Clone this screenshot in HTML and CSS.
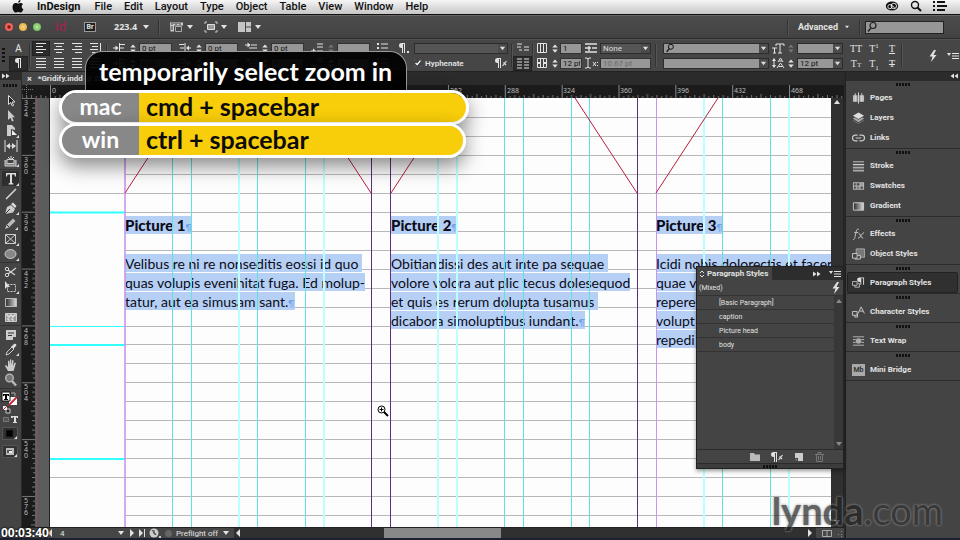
FILE: index.html
```html
<!DOCTYPE html>
<html lang="en">
<head>
<meta charset="utf-8">
<title>Gridify.indd</title>
<link rel="stylesheet" href="styles.css">
</head>
<body>
<svg class="sprite" aria-hidden="true">
  <defs>
    <linearGradient id="fade"><stop offset="0" stop-color="#2a2a2a"/><stop offset="1" stop-color="#ddd"/></linearGradient>
    <symbol id="left" viewBox="0 0 14 12"><path d="M2 1.5h10M2 4.5h7M2 7.5h10M2 10.5h7" stroke="currentColor" stroke-width="1.2"/></symbol>
    <symbol id="center" viewBox="0 0 14 12"><path d="M2 1.5h10M4 4.5h6M2 7.5h10M4 10.5h6" stroke="currentColor" stroke-width="1.2"/></symbol>
    <symbol id="right" viewBox="0 0 14 12"><path d="M2 1.5h10M5 4.5h7M2 7.5h10M5 10.5h7" stroke="currentColor" stroke-width="1.2"/></symbol>
    <symbol id="spine" viewBox="0 0 14 12"><path d="M2 1.5h8M4 4.5h6M2 7.5h8M4 10.5h6" stroke="currentColor" stroke-width="1.2"/><path d="M12.5 1v10" stroke="currentColor"/></symbol>
    <symbol id="just" viewBox="0 0 14 12"><path d="M2 1.5h10M2 4.5h10M2 7.5h10M2 10.5h10" stroke="currentColor" stroke-width="1.2"/></symbol>
    <symbol id="indent" viewBox="0 0 14 12"><path d="M1 6h5M7.500 1v10M8 2.500h5M8 6h4M8 9.500h5" stroke="currentColor"/><path d="M3.500 3.500L6.500 6L3.500 8.500z" fill="currentColor"/></symbol>
    <symbol id="outdent" viewBox="0 0 14 12"><path d="M13 6H9M7 1v10M1 2.500h5M2 6h4M1 9.500h5" stroke="currentColor"/><path d="M11 3.500L8 6l3 2.500z" fill="currentColor"/></symbol>
    <symbol id="first" viewBox="0 0 14 12"><path d="M1 3h5M7 3h6M5 6h8M7 9.500h6" stroke="currentColor" stroke-width="1.2"/><path d="M3.500 .5L6.500 3L3.500 5.500z" fill="currentColor"/></symbol>
    <symbol id="last" viewBox="0 0 14 12"><path d="M7 2h6M7 5h6M1 9h4M7 9h6" stroke="currentColor" stroke-width="1.2"/><path d="M3 6.500L6 9L3 11.500z" fill="currentColor"/></symbol>
    <symbol id="bullets" viewBox="0 0 14 12"><path d="M2 1h2v2H2zM2 5h2v2H2zM2 9h2v2H2z" fill="currentColor"/><path d="M6 2h7M6 6h7M6 10h7" stroke="currentColor" stroke-width="1.2"/></symbol>
    <symbol id="pilcrow" viewBox="0 0 14 12"><path d="M9 1H5.500a2.500 2.500 0 0 0 0 5H6v5h1V2h1v9h1z" fill="currentColor"/></symbol>
    <symbol id="pildot" viewBox="0 0 14 12"><path d="M9 1H5.500a2.500 2.500 0 0 0 0 5H6v5h1V2h1v9h1zM11 9h2v2h-2z" fill="currentColor"/></symbol>
    <symbol id="pilplus" viewBox="0 0 14 12"><path d="M7 1H3.500a2.500 2.500 0 0 0 0 5H4v5h1V2h1v9h1z" fill="currentColor"/><path d="M8.500 9l4-5M9.500 5.500l2.500 2.500" stroke="currentColor" stroke-width="1.2"/></symbol>
    <symbol id="span" viewBox="0 0 14 12"><path d="M1 2h5M1 5h4M8 5h5M8 8h5M3 8h3" stroke="currentColor" stroke-width="1.2"/></symbol>
    <symbol id="cols" viewBox="0 0 14 12"><path d="M1 2h5M1 5h5M1 8h5M1 11h5M8 2h5M8 5h5M8 8h5M8 11h5" stroke="currentColor"/></symbol>
    <symbol id="columns" viewBox="0 0 12 12"><path d="M1.500 1.500h9v9h-9zM4.500 1v10M7.500 1v10" fill="none" stroke="currentColor"/></symbol>
    <symbol id="gutter" viewBox="0 0 12 12"><path d="M1.500 1.500h9v9h-9zM4.500 1v10M7.500 1v10" fill="none" stroke="currentColor"/><path d="M2 6h3M7 6h3" stroke="currentColor" stroke-width="2"/></symbol>
    <symbol id="bars" viewBox="0 0 14 12"><path d="M1 2h12M1 6h6M8 6h5M1 10h12M5 4v5" stroke="currentColor" stroke-width="1.400"/></symbol>
    <symbol id="ibeam" viewBox="0 0 14 12"><path d="M1 1h2l1 1 1-1h2M4 2v8M1 11h2l1-1 1 1h2M9 5l3 4M12 5L9 9M13.500 5v1M13.500 8v1" fill="none" stroke="currentColor"/></symbol>
    <symbol id="search" viewBox="0 0 12 12"><circle cx="7" cy="4.500" r="3" fill="none" stroke="currentColor" stroke-width="1.200"/><path d="M5 7L2 10.500" stroke="currentColor" stroke-width="1.600"/></symbol>
    <symbol id="spot" viewBox="0 0 12 12"><circle cx="5" cy="5" r="3.500" fill="none" stroke="currentColor" stroke-width="1.400"/><path d="M7.500 7.500L11 11" stroke="currentColor" stroke-width="2"/></symbol>
    <symbol id="spin" viewBox="0 0 8 12"><path d="M1 5l3-3.500L7 5zM1 7l3 3.500L7 7z" fill="currentColor"/></symbol>
    <symbol id="down" viewBox="0 0 8 6"><path d="M1 1h6L4 5z" fill="currentColor"/></symbol>
    <symbol id="play" viewBox="0 0 6 8"><path d="M1 0v8l4-4z" fill="currentColor"/></symbol>
    <symbol id="playend" viewBox="0 0 6 8"><path d="M0 0v8l4-4z" fill="currentColor"/><path d="M5.500 0v8" stroke="currentColor"/></symbol>
    <symbol id="back" viewBox="0 0 6 8"><path d="M5 0v8L1 4z" fill="currentColor"/></symbol>
    <symbol id="bolt" viewBox="0 0 10 14"><path d="M6 1L1.500 7.500h3L3 13l5.500-7H5.500L8 1z" fill="currentColor"/></symbol>
    <symbol id="flyout" viewBox="0 0 12 8"><path d="M0 1h4L2 4z" fill="currentColor"/><path d="M5 1.500h7M5 4h7M5 6.500h7" stroke="currentColor"/></symbol>
    <symbol id="dbl" viewBox="0 0 8 6"><path d="M0 .5v5L3.500 3zM4 .5v5L7.500 3z" fill="currentColor"/></symbol>
    <symbol id="dbll" viewBox="0 0 8 6"><path d="M4 .5v5L.5 3zM8 .5v5L4.500 3z" fill="currentColor"/></symbol>
    <symbol id="updown" viewBox="0 0 6 8"><path d="M1 3l2-2 2 2M1 5l2 2 2-2" fill="none" stroke="currentColor"/></symbol>
    <symbol id="kern" viewBox="0 0 14 12"><path d="M1 6h5M3.500 6v5M2 11h3M5 2h8M9 2v9M7 11h4M5 2v2M13 2v2" stroke="currentColor" fill="none"/></symbol>
    <symbol id="lead" viewBox="0 0 14 12"><path d="M7 5l2.500-4L12 5M8 4h3M6 11l3.500-5 3.500 5M7.500 9.500h4M3 2v8" stroke="currentColor" fill="none"/><path d="M1 4l2-3 2 3zM1 8l2 3 2-3z" fill="currentColor"/></symbol>
    <symbol id="apple" viewBox="0 0 12 13"><path d="M8.500 0C7 .2 6 1.500 6.200 2.800 7.600 2.800 8.600 1.500 8.500 0zM6.200 3.700C5.500 3.700 4.700 3.100 3.700 3.100 1.900 3.100.5 4.700.5 7.200c0 2.600 1.700 5.300 3.200 5.300.9 0 1.400-.6 2.500-.6s1.500.6 2.400.6c1.200 0 2.300-1.900 2.800-3.300C9.300 8.400 9.100 5.300 11 4.300 9.700 2.600 7.600 3 6.200 3.700z" fill="currentColor"/></symbol>
    <symbol id="cloud" viewBox="0 0 14 11"><ellipse cx="7" cy="5.500" rx="6.800" ry="5" fill="currentColor"/><circle cx="4.700" cy="6.200" r="2.300" fill="none" stroke="#eee"/><circle cx="9" cy="5.500" r="3" fill="none" stroke="#eee"/><path d="M6 4l4 3.500" stroke="#eee"/></symbol>
    <symbol id="list" viewBox="0 0 14 10"><path d="M0 1h2M4 1h8M0 5h2M4 5h10M0 9h2M4 9h8" stroke="currentColor" stroke-width="2"/></symbol>
    <symbol id="view" viewBox="0 0 14 12"><path d="M0 1.500h13v3H4v6H.5z" fill="#ccc"/><path d="M5.500 5.500h6v5h-6z" fill="none" stroke="#aaa"/><path d="M2 2v2M4 2v1M6 2v2M8 2v1M10 2v2M1 6h2M1 8h2" stroke="#333"/></symbol>
    <symbol id="screen" viewBox="0 0 14 12"><path d="M3.500 3.500h7v5h-7z" fill="#999" stroke="#ddd"/><path d="M1 3V1h2M11 1h2v2M13 9v2h-2M3 11H1V9" fill="none" stroke="#ccc"/></symbol>
    <symbol id="arrange" viewBox="0 0 14 12"><path d="M0 1h7v10H0zM8 1h5v4.500H8zM8 6.500h5V11H8z" fill="#c5c5c5"/></symbol>
    <symbol id="t-select" viewBox="0 0 16 14"><path d="M5.500 1.500v9l2.200-2 1.600 3.500 1.300-.6L9 8h3z" fill="#222" stroke="#ddd"/></symbol>
    <symbol id="t-direct" viewBox="0 0 16 14"><path d="M5 1v10l2.500-2.300L9 12.500l1.700-.7L9.200 8.200H12z" fill="#ccc"/></symbol>
    <symbol id="t-page" viewBox="0 0 16 14"><path d="M4 1h5l3 3v2L8 5v7H4z" fill="#ccc"/><path d="M9 6l5 5H9z" fill="#eee"/><path d="M16 14v-3l-3 3z" fill="#ddd"/></symbol>
    <symbol id="t-gap" viewBox="0 0 16 14"><path d="M2 1v12M14 1v12M4 7h8" stroke="#ddd"/><path d="M3 7l4-3v6zM13 7L9 4v6z" fill="#ddd"/></symbol>
    <symbol id="t-collect" viewBox="0 0 16 14"><path d="M2 6v6h11V6M4 5.500h7v4H4z" fill="#888" stroke="#ccc"/><path d="M8 6V2M5 3l3 3 3-3" stroke="#ddd" fill="none"/><path d="M16 13v-3l-3 3z" fill="#ddd"/></symbol>
    <symbol id="t-type" viewBox="0 0 16 14"><path d="M3 1h10v3.500h-1L11.500 2.500H9V11l1.500.5v1h-5v-1L7 11V2.500H4.500L4 4.500H3z" fill="#ddd"/><path d="M16 14v-3l-3 3z" fill="#ddd"/></symbol>
    <symbol id="t-line" viewBox="0 0 16 14"><path d="M3 12L13 2" stroke="#ddd" stroke-width="1.400"/></symbol>
    <symbol id="t-pen" viewBox="0 0 16 14"><path d="M2 12l2-7 4-2 4 4-2 3.500z" fill="#ccc"/><path d="M8 2l2-1.500 3.500 3.500L12 6z" fill="#ddd"/><path d="M2 12l5-5" stroke="#333"/><path d="M16 13v-3l-3 3z" fill="#ddd"/></symbol>
    <symbol id="t-pencil" viewBox="0 0 16 14"><path d="M2 12l1.500-4L10 1.500l2.500 2.500L6 10.500z" fill="#bbb"/><path d="M4 8l2 2" stroke="#333"/><path d="M15 13v-3l-3 3z" fill="#ddd"/></symbol>
    <symbol id="t-frame" viewBox="0 0 16 14"><path d="M2.500 2.500h10v9h-10zM2.500 2.500l10 9M12.500 2.500l-10 9" stroke="#ccc" fill="none"/><path d="M16 14v-3l-3 3z" fill="#ddd"/></symbol>
    <symbol id="t-ellipse" viewBox="0 0 16 14"><ellipse cx="7.500" cy="7" rx="5.500" ry="4.500" fill="#888" stroke="#ccc"/><path d="M16 14v-3l-3 3z" fill="#ddd"/></symbol>
    <symbol id="t-scissors" viewBox="0 0 16 14"><path d="M13 3L5 9M12 10L5 5" stroke="#ccc" stroke-width="1.500"/><circle cx="4" cy="4" r="1.700" fill="none" stroke="#ddd"/><circle cx="4" cy="10" r="1.700" fill="none" stroke="#ddd"/></symbol>
    <symbol id="t-transform" viewBox="0 0 16 14"><path d="M4.500 4.500h8v7h-8z" fill="none" stroke="#ccc" stroke-dasharray="2 1"/><path d="M2 1v8l2-2 3 0z" fill="#ddd"/><path d="M16 14v-3l-3 3z" fill="#ddd"/></symbol>
    <symbol id="t-grad" viewBox="0 0 16 14"><path d="M2.500 3.500h11v8h-11z" fill="url(#fade)" stroke="#bbb"/></symbol>
    <symbol id="t-feather" viewBox="0 0 16 14"><path d="M2.500 3.500h11v8h-11z" fill="#999" stroke="#ccc"/><path d="M3 5h2v2h2V5h2v2h2V5h2M4 9h2v2M8 9h2v2" stroke="#eee" fill="none"/></symbol>
    <symbol id="t-note" viewBox="0 0 16 14"><path d="M3 2h10v7h-3v3H3z" fill="#ccc"/><path d="M5 5h6M5 7.500h4" stroke="#333"/></symbol>
    <symbol id="t-dropper" viewBox="0 0 16 14"><path d="M3 12l1-3 5-5 2 2-5 5z" fill="none" stroke="#ccc"/><path d="M8 3l1 0 2-2c2-1 3 1 2 2l-2 2 0 2z" fill="#ddd"/><path d="M16 13v-3l-3 3z" fill="#ddd"/></symbol>
    <symbol id="t-hand" viewBox="0 0 16 14"><path d="M5 13L2 8l1-1 2 2V3l1.300-.5L7 7V1.500h1.300V7l1-5 1.200.3L10.200 8l1.500-3.500 1.200.5L11.500 10l-1 3z" fill="#ccc"/></symbol>
    <symbol id="t-zoom" viewBox="0 0 16 14"><circle cx="6.500" cy="5" r="3.800" fill="#777" stroke="#bbb" stroke-width="1.300"/><path d="M9 8l4 4.500" stroke="#bbb" stroke-width="2.400"/></symbol>
    <symbol id="d-pages" viewBox="0 0 14 12"><path d="M1 3h5v7H1zM8 3h5v7H8z" fill="#bbb"/><path d="M7 0v12M3.500 1v9M10.500 1v9" stroke="#ddd"/></symbol>
    <symbol id="d-layers" viewBox="0 0 14 12"><path d="M7 0l6 3.500L7 7 1 3.500z" fill="#ddd"/><path d="M1 6.500l2-1L7 8l4-2.500 2 1L7 10.500z" fill="#aaa"/><path d="M1 8.500l6 3.500 6-3.500" fill="none" stroke="#777"/></symbol>
    <symbol id="d-links" viewBox="0 0 14 12"><path d="M6 3H3.500a3 3 0 0 0 0 6H6M8 3h2.500a3 3 0 0 1 0 6H8M4 6h6" fill="none" stroke="#ccc" stroke-width="1.300"/></symbol>
    <symbol id="d-stroke" viewBox="0 0 14 12"><path d="M1 1.500h12" stroke="#ccc"/><path d="M1 4.500h12" stroke="#ccc" stroke-width="1.500"/><path d="M1 7.800h12M1 11h12" stroke="#aaa" stroke-width="2"/></symbol>
    <symbol id="d-swatch" viewBox="0 0 14 12"><path d="M1 2h12v8H1z" fill="#bbb"/><path d="M2 3h2v2.500H2zM5 3h3v2.500H5zM2 6.500h2V9H2z" fill="#444"/><path d="M5 6.500h3V9H5z" fill="#777"/><path d="M9 3h3v2.500H9z" fill="#999"/><path d="M9 6.500h3V9H9z" fill="#555"/></symbol>
    <symbol id="d-grad" viewBox="0 0 14 12"><path d="M1.500 2.500h11v8h-11z" fill="url(#fade)" stroke="#ccc"/></symbol>
    <symbol id="d-fx" viewBox="0 0 14 12"><path d="M1 12c2 0 2-1.500 3-6.500S5.500.8 7.500.8M2.500 4.500h4M7 5c2 0 2 5.500 5 5.500M13 4.500c-2 0-4 6-6.500 6" fill="none" stroke="#ccc"/></symbol>
    <symbol id="d-object" viewBox="0 0 14 12"><path d="M4.500.5h9v9h-9z" fill="#777" stroke="#aaa"/><path d="M.5 5.500h5v5h-5zM6 7.500h3v4H3" fill="#444" stroke="#ccc"/></symbol>
    <symbol id="d-para" viewBox="0 0 14 12"><path d="M.5 4.500h5v4h-5zM6 6.500h2v4H3v-2" fill="none" stroke="#bbb"/><path d="M13 0H8a2.500 2.500 0 0 0 0 5h1v3h1V1h2v7h1z" fill="#ddd"/></symbol>
    <symbol id="d-char" viewBox="0 0 14 12"><path d="M.5 5.500h5v4h-5zM6 7.500v4H3v-2M6.500 7.500L9.800.5l3.500 7M8 5h4" fill="none" stroke="#ccc"/></symbol>
    <symbol id="d-wrap" viewBox="0 0 14 12"><path d="M1 1.500h12M1 10.500h12M1 4.500h3M1 7.500h3M10 4.500h3M10 7.500h3" stroke="#bbb"/><circle cx="7" cy="6" r="3" fill="#aaa"/></symbol>
  </defs>
</svg>

<div class="app">
  <nav class="menubar">
    <svg class="apple"><use href="#apple"/></svg>
    <a href="#" class="brand">InDesign</a><a href="#">File</a><a href="#">Edit</a><a href="#">Layout</a><a href="#">Type</a><a href="#">Object</a><a href="#">Table</a><a href="#">View</a><a href="#">Window</a><a href="#">Help</a>
    <div class="status-icons">
      <svg class="i14"><use href="#cloud"/></svg>
      <svg class="i12"><use href="#spot"/></svg>
      <svg class="i14"><use href="#list"/></svg>
    </div>
  </nav>

  <header class="appbar">
    <span class="light red"></span><span class="light amber"></span><span class="light green"></span>
    <span class="id">Id</span>
    <button class="br">Br</button>
    <button class="zoom">223.4 <svg class="dn"><use href="#down"/></svg></button>
    <i class="rule"></i>
    <button class="drop" aria-label="View options"><svg class="i14"><use href="#view"/></svg><svg class="dn"><use href="#down"/></svg></button>
    <button class="drop" aria-label="Screen mode"><svg class="i14"><use href="#screen"/></svg><svg class="dn"><use href="#down"/></svg></button>
    <button class="drop" aria-label="Arrange documents"><svg class="i14"><use href="#arrange"/></svg><svg class="dn"><use href="#down"/></svg></button>
    <div class="workspace">
      <i class="rule"></i>
      <button class="advanced">Advanced <svg class="dn small"><use href="#down"/></svg></button>
      <i class="rule"></i>
      <span class="help"><svg class="i12"><use href="#search"/></svg><input type="text" aria-label="Search help"></span>
    </div>
  </header>

  <div class="control">
    <i class="vgrip"></i>
    <div class="grp modes"><button>A</button><button class="on" aria-label="Paragraph"><svg class="i14"><use href="#pilcrow"/></svg></button></div>
    <i class="rule"></i>
    <div class="grp aligns">
      <button class="on" aria-label="Left"><svg class="i14"><use href="#left"/></svg></button><button aria-label="Center"><svg class="i14"><use href="#center"/></svg></button><button aria-label="Right"><svg class="i14"><use href="#right"/></svg></button><button aria-label="Away from spine"><svg class="i14"><use href="#spine"/></svg></button>
      <button aria-label="Justify left"><svg class="i14"><use href="#just"/></svg></button><button aria-label="Justify center"><svg class="i14"><use href="#just"/></svg></button><button aria-label="Justify right"><svg class="i14"><use href="#just"/></svg></button><button aria-label="Justify all"><svg class="i14"><use href="#just"/></svg></button>
    </div>
    <i class="rule"></i>
    <div class="grp num"><svg class="i14"><use href="#indent"/></svg><svg class="sp"><use href="#spin"/></svg><input aria-label="Left indent" value="0 pt"><svg class="i14"><use href="#indent"/></svg><svg class="sp"><use href="#spin"/></svg><input aria-label="First line indent" value="0 pt"></div>
    <div class="grp num"><svg class="i14"><use href="#outdent"/></svg><svg class="sp"><use href="#spin"/></svg><input aria-label="Right indent" value="0 pt"><svg class="i14"><use href="#outdent"/></svg><svg class="sp"><use href="#spin"/></svg><input aria-label="Last line indent" value="0 pt"></div>
    <div class="grp num"><svg class="i14"><use href="#first"/></svg><svg class="sp"><use href="#spin"/></svg><input aria-label="Space before" value="0 pt"><svg class="i14"><use href="#first"/></svg><svg class="sp"><use href="#spin"/></svg><input aria-label="Drop cap lines" value="0"></div>
    <div class="grp num"><svg class="i14"><use href="#last"/></svg><svg class="sp dim"><use href="#spin"/></svg><input aria-label="Space after"><svg class="i14"><use href="#last"/></svg><svg class="sp"><use href="#spin"/></svg><input aria-label="Drop cap characters" value="0"></div>
    <div class="grp lists"><button aria-label="Bullets"><svg class="i14"><use href="#bullets"/></svg></button><button aria-label="Numbers"><svg class="i14"><use href="#bullets"/></svg></button></div>
    <div class="grp style">
      <svg class="i14"><use href="#pildot"/></svg><span class="pick dark"><select aria-label="Paragraph style"><option></option></select><svg class="dn"><use href="#down"/></svg></span>
      <span></span><span class="hyph"><label><input type="checkbox" checked>Hyphenate</label><svg class="i14"><use href="#pilplus"/></svg></span>
    </div>
    <i class="rule"></i>
    <div class="grp lists"><button aria-label="Span columns"><svg class="i14"><use href="#span"/></svg></button><button class="on" aria-label="Balance"><svg class="i14"><use href="#cols"/></svg></button></div>
    <i class="rule"></i>
    <div class="grp num cols"><svg class="i12"><use href="#columns"/></svg><svg class="sp"><use href="#spin"/></svg><input aria-label="Columns" value="1"><svg class="i12"><use href="#gutter"/></svg><svg class="sp"><use href="#spin"/></svg><input aria-label="Gutter" value="12 pt"></div>
    <div class="grp spans"><svg class="i14"><use href="#bars"/></svg><span class="pick dark"><select aria-label="Span"><option>None</option></select><svg class="dn"><use href="#down"/></svg></span><svg class="i14"><use href="#ibeam"/></svg><input class="off" aria-label="Cursor position" value="10.67 pt"></div>
    <i class="rule"></i>
    <div class="grp fonts"><span class="pick"><svg class="lens"><use href="#search"/></svg><select aria-label="Font family"><option></option></select><svg class="dn"><use href="#down"/></svg></span><span class="pick"><select aria-label="Font style"><option></option></select><svg class="dn"><use href="#down"/></svg></span></div>
    <div class="grp num size"><svg class="i14"><use href="#kern"/></svg><svg class="sp dim"><use href="#spin"/></svg><span class="pick"><select aria-label="Font size"><option></option></select><svg class="dn"><use href="#down"/></svg></span><svg class="i14"><use href="#lead"/></svg><svg class="sp"><use href="#spin"/></svg><span class="pick"><select aria-label="Leading"><option>12 pt</option></select><svg class="dn"><use href="#down"/></svg></span></div>
    <div class="grp caps"><button>TT</button><button>T<sup>1</sup></button><button class="under">T</button><button>T<small>T</small></button><button>T<sub>1</sub></button><button class="strike">T</button></div>
    <i class="rule"></i>
    <div class="end"><svg class="bolt"><use href="#bolt"/></svg><svg class="fly"><use href="#flyout"/></svg></div>
  </div>

  <div class="workarea">
    <aside class="tools">
      <div class="strip"><svg class="dbl"><use href="#dbl"/></svg></div>
      <i class="grip"></i>
      <div class="set">
        <button aria-label="Selection"><svg><use href="#t-select"/></svg></button><button aria-label="Direct selection"><svg><use href="#t-direct"/></svg></button><button aria-label="Page"><svg><use href="#t-page"/></svg></button><button aria-label="Gap"><svg><use href="#t-gap"/></svg></button><button aria-label="Content collector"><svg><use href="#t-collect"/></svg></button>
      </div>
      <div class="set">
        <button class="on" aria-label="Type"><svg><use href="#t-type"/></svg></button><button aria-label="Line"><svg><use href="#t-line"/></svg></button><button aria-label="Pen"><svg><use href="#t-pen"/></svg></button><button aria-label="Pencil"><svg><use href="#t-pencil"/></svg></button><button aria-label="Rectangle frame"><svg><use href="#t-frame"/></svg></button><button aria-label="Ellipse"><svg><use href="#t-ellipse"/></svg></button>
      </div>
      <div class="set">
        <button aria-label="Scissors"><svg><use href="#t-scissors"/></svg></button><button aria-label="Free transform"><svg><use href="#t-transform"/></svg></button><button aria-label="Gradient swatch"><svg><use href="#t-grad"/></svg></button><button aria-label="Gradient feather"><svg><use href="#t-feather"/></svg></button>
      </div>
      <div class="set">
        <button aria-label="Note"><svg><use href="#t-note"/></svg></button><button aria-label="Eyedropper"><svg><use href="#t-dropper"/></svg></button><button aria-label="Hand"><svg><use href="#t-hand"/></svg></button><button aria-label="Zoom"><svg><use href="#t-zoom"/></svg></button>
      </div>
      <svg class="fills" viewBox="0 0 20 72">
        <path d="M9 6h8v8H9z" fill="#fff"/><path d="M9 14l8-8" stroke="#c23" stroke-width="1.800"/><path d="M11 2h4v3" stroke="#aaa" fill="none"/>
        <path d="M2 1h8v9H2z" fill="#fff" stroke="#111"/><path d="M3 3h6v2H8L7 4v4h1v1H4V8h1V4L4 5H3z" fill="#000"/>
        <path d="M6 18h4v4H6z" fill="#222" stroke="#ccc"/><path d="M3 15h4v4H3z" fill="#eee"/><path d="M3 19l4-4" stroke="#c23"/>
        <path d="M3.500 26.500h5v4h-5z" fill="#555" stroke="#777"/><path d="M11 25h7v2h-1l-1-1v5h1v1h-4v-1h1v-5l-2 1h-1z" fill="#ddd"/>
        <path d="M2.500 36.500h15v12h-15z" fill="#333" stroke="#555"/><path d="M6 39h7v7H6z" fill="#000" stroke="#222"/><path d="M17 48v-3l-3 3z" fill="#ddd"/>
        <path d="M2.500 54.500h15v12h-15z" fill="#333" stroke="#555"/><path d="M6 57h8v7H6z" fill="#bbb"/><path d="M7 59h5v3H7z" fill="#555"/><path d="M9 60h3v2H9z" fill="#eee"/><path d="M17 66v-3l-3 3z" fill="#ddd"/>
      </svg>
    </aside>

    <main class="doc">
      <div class="tabs"><div class="tab"><button aria-label="Close">×</button>*Gridify.indd @ 223%</div></div>
      <div class="hruler">
        <svg width="100%" height="13">
          <defs><pattern id="ht" x="28" width="56.850" height="13" patternUnits="userSpaceOnUse"><path d="M.5 0v13" stroke="#888"/><path d="M5.200 11v2M9.900 10v3M14.700 11v2M19.400 10v3M24.200 11v2M28.900 9v4M33.600 11v2M38.400 10v3M43.100 11v2M47.900 10v3M52.600 11v2" stroke="#777"/></pattern></defs>
          <rect width="100%" height="13" fill="url(#ht)"/>
          <path d="M0 4.500h11M4.500 0v13" stroke="#777" stroke-dasharray="1 1"/>
          <g class="digits"><text x="30" y="8">0</text><text x="428" y="8">252</text><text x="485" y="8">288</text><text x="541" y="8">324</text><text x="598" y="8">360</text><text x="655" y="8">396</text><text x="712" y="8">432</text><text x="769" y="8">468</text></g>
        </svg>
      </div>
      <div class="view">
        <div class="vruler">
          <svg width="13" height="100%">
            <defs><pattern id="vt" y="0" width="13" height="56.850" patternUnits="userSpaceOnUse"><path d="M0 .5h13" stroke="#777"/><path d="M11 5.200h2M10 9.900h3M11 14.700h2M10 19.400h3M11 24.200h2M9 28.900h4M11 33.600h2M10 38.400h3M11 43.100h2M10 47.900h3M11 52.600h2" stroke="#777"/></pattern></defs>
            <rect width="13" height="100%" fill="url(#vt)"/>
            <g class="digits"><text x="2" y="7">3<tspan x="2" dy="6">2</tspan><tspan x="2" dy="6">4</tspan></text><text x="2" y="64">3<tspan x="2" dy="6">6</tspan><tspan x="2" dy="6">0</tspan></text><text x="2" y="121">3<tspan x="2" dy="6">9</tspan><tspan x="2" dy="6">6</tspan></text><text x="2" y="178">4<tspan x="2" dy="6">3</tspan><tspan x="2" dy="6">2</tspan></text><text x="2" y="235">4<tspan x="2" dy="6">6</tspan><tspan x="2" dy="6">8</tspan></text><text x="2" y="291">5<tspan x="2" dy="6">0</tspan><tspan x="2" dy="6">4</tspan></text><text x="2" y="348">5<tspan x="2" dy="6">4</tspan><tspan x="2" dy="6">0</tspan></text><text x="2" y="405">5<tspan x="2" dy="6">7</tspan><tspan x="2" dy="6">6</tspan></text></g>
          </svg>
        </div>
        <div class="board">
          <svg class="layer" width="100%" height="100%">
            <rect x="15" width="100%" height="100%" fill="#fdfdfd"/>
            <path d="M14.500 0v2000" stroke="#222"/><path d="M1.500 0v2000" stroke="#a05070" stroke-opacity=".7"/>
            <path d="M90 19.500h2000M90 38.500h2000M90 57.500h2000M90 76.500h2000M15 95.500h2000M90 114.500h2000M90 133.500h2000M90 152.500h2000M90 171.500h2000M90 190.500h2000M90 209.500h2000M90 228.500h2000M90 246.500h2000M90 265.500h2000M90 284.500h2000M90 303.500h2000M90 322.500h2000M90 341.500h2000M90 360.500h2000M15 379.500h2000M90 398.500h2000M90 417.500h2000" stroke="#b8b8b8"/>
            <path d="M15 114.500h75M15 247h75M15 361h75" stroke="#3ff" stroke-width="2"/><path d="M15 228.500h75" stroke="#3ff"/>
          </svg>
          <article class="frame one"><h2><mark>Picture 1<b>¶</b></mark></h2><p><mark>Velibus re ni re nonseditis eossi id quo&nbsp;</mark><mark>quas volupis evenihitat fuga. Ed molup-</mark><mark>tatur, aut ea simusam sant.<b>¶</b></mark></p></article>
          <article class="frame two"><h2><mark>Picture 2<b>¶</b></mark></h2><p><mark>Obitiandissi des aut inte pa sequae&nbsp;</mark><mark>volore volora aut plic tecus dolesequod</mark><mark>et quis es rerum dolupta tusamus&nbsp;</mark><mark>dicabora simoluptibus iundant.<b>¶</b></mark></p></article>
          <article class="frame three"><h2><mark>Picture 3<b>¶</b></mark></h2><p><mark>Icidi nobis dolorectis et facer</mark><mark>quae v</mark><mark>repere</mark><mark>volupt</mark><mark>repedi</mark></p></article>
          <svg class="layer" width="100%" height="100%">
            <g fill="#5fe3df"><rect x="137" width="1" height="100%"/><rect x="156" width="1" height="100%"/><rect x="222" width="1" height="100%"/><rect x="270" width="1" height="100%"/><rect x="469" width="1" height="100%"/><rect x="488" width="1" height="100%"/><rect x="536" width="1" height="100%"/><rect x="554" width="1" height="100%"/><rect x="687" width="1" height="100%"/><rect x="735" width="1" height="100%"/></g>
            <g fill="#bff"><rect x="203" width="2" height="100%"/><rect x="288" width="2" height="100%"/><rect x="402" width="2" height="100%"/><rect x="421" width="2" height="100%"/><rect x="668" width="2" height="100%"/><rect x="753" width="2" height="100%"/></g>
            <g fill="#5a2f7c"><rect x="336" width="1" height="100%"/><rect x="355" width="1" height="100%"/><rect x="602" width="1" height="100%"/></g>
            <g fill="#c994ea"><rect x="89" width="2" height="100%" fill-opacity=".8"/><rect x="621" width="1" height="100%"/></g>
            <path d="M152 0L90 95M274 0l62 95M418 0l-62 95M540 0l62 95M683 0l-62 95" stroke="#b81e3c" fill="none"/>
          </svg>
          <svg class="cursor" viewBox="0 0 12 12"><circle cx="4.500" cy="4.500" r="3.500" fill="#fff" stroke="#000"/><path d="M2.500 4.500h4M4.500 2.500v4" stroke="#000"/><path d="M7 7l4 4" stroke="#000" stroke-width="2"/></svg>
        </div>
        <div class="vscroll"><svg class="dn"><use href="#down"/></svg><svg class="dn"><use href="#down"/></svg></div>
      </div>
      <div class="bottom">
        <button aria-label="Previous page"><svg class="pl"><use href="#back"/></svg></button>
        <span class="page">4</span>
        <svg class="dn"><use href="#down"/></svg>
        <svg class="pl"><use href="#play"/></svg><svg class="pl"><use href="#playend"/></svg>
        <svg class="i12" viewBox="0 0 12 12"><circle cx="5" cy="6" r="4.500" fill="#ccc"/><path d="M5 3v4h2M3 3l4 5" stroke="#444" fill="none"/><path d="M10 9h2v2h-2z" fill="#ccc"/></svg>
        <span class="dot"></span><span class="pre">Preflight off</span><svg class="dn"><use href="#down"/></svg>
        <div class="hscroll"><svg class="pl"><use href="#back"/></svg><i class="thumb"></i><svg class="pl"><use href="#play"/></svg></div>
        <svg class="split" viewBox="0 0 24 9"><path d="M2.500 1.500h9v6h-9zM7 1v7" fill="none" stroke="#aaa"/><path d="M21 2h1v1h-1zM21 5h1v1h-1zM18 5h1v1h-1zM21 7h1v1h-1z" fill="#888"/></svg>
      </div>
      <section class="panel">
        <div class="phead"><h3><svg class="pl"><use href="#updown"/></svg>Paragraph Styles</h3><svg class="dbl"><use href="#dbl"/></svg><svg class="fly"><use href="#flyout"/></svg></div>
        <div class="mixed">(Mixed)<svg class="bolt"><use href="#bolt"/></svg></div>
        <div class="plist"><ul><li>[Basic Paragraph]</li><li>caption</li><li>Picture head</li><li>body</li></ul><div class="pscroll"><svg class="dn up"><use href="#down"/></svg><svg class="dn"><use href="#down"/></svg></div></div>
        <div class="pfoot">
          <svg class="i12" viewBox="0 0 12 12"><path d="M1 2h4l1 1.500h5V10H1z" fill="#bbb"/></svg>
          <svg class="i14"><use href="#pilplus"/></svg>
          <svg class="i12" viewBox="0 0 12 12"><path d="M2 2h8v8H5V7H2z" fill="#ccc"/><path d="M2 8h2v2z" fill="#888"/></svg>
          <svg class="i12" viewBox="0 0 12 12"><path d="M1 3.500h9M4 3V1.500h3V3M2.500 4v6.500h6V4M4.500 5v4M6.500 5v4" stroke="#777" fill="none"/></svg>
        </div>
        <div class="pend"><i class="grip"></i></div>
      </section>
    </main>

    <aside class="dock">
      <div class="strip"><svg class="dbl"><use href="#dbll"/></svg></div>
      <div class="sec"><i class="grip"></i><button><svg><use href="#d-pages"/></svg>Pages</button><button><svg><use href="#d-layers"/></svg>Layers</button><button><svg><use href="#d-links"/></svg>Links</button></div>
      <div class="sec"><i class="grip"></i><button><svg><use href="#d-stroke"/></svg>Stroke</button><button><svg><use href="#d-swatch"/></svg>Swatches</button><button><svg><use href="#d-grad"/></svg>Gradient</button></div>
      <div class="sec"><i class="grip"></i><button><svg><use href="#d-fx"/></svg>Effects</button><button><svg><use href="#d-object"/></svg>Object Styles</button></div>
      <div class="sec solo"><i class="grip"></i><button class="on"><svg><use href="#d-para"/></svg>Paragraph Styles</button></div>
      <div class="sec solo"><i class="grip"></i><button><svg><use href="#d-char"/></svg>Character Styles</button></div>
      <div class="sec solo"><i class="grip"></i><button><svg><use href="#d-wrap"/></svg>Text Wrap</button></div>
      <div class="sec solo"><i class="grip"></i><button><span class="mb">Mb</span>Mini Bridge</button></div>
    </aside>
  </div>
  <div class="desk"></div>
</div>

<div class="callout">
  <div class="tip">temporarily select zoom in</div>
  <div class="key"><span>mac</span><strong>cmd + spacebar</strong></div>
  <div class="key win"><span>win</span><strong>ctrl + spacebar</strong></div>
</div>
<div class="time">00:03:40</div>
<div class="mark"><b>lynda</b>.com</div>
</body>
</html>
```
FILE: styles.css
```css
* { box-sizing: border-box; }
body { margin: 0; overflow: hidden; background: #444; color: #e2e2e2; font-family: Roboto, "Noto Sans", sans-serif; font-size: 8px; }
button, input, select { font: inherit; color: inherit; margin: 0; padding: 0; border: 0; background: none; border-radius: 0; }
button { display: flex; align-items: center; justify-content: center; }
svg { display: block; flex: none; }
i { display: block; flex: none; }
.sprite { position: absolute; width: 0; height: 0; }
.i14 { width: 14px; height: 12px; }
.i12 { width: 12px; height: 12px; }
.dn { width: 8px; height: 6px; }
.dn.small { width: 6px; height: 4px; }
.pl { width: 6px; height: 8px; }
.dbl { width: 8px; height: 6px; }
.fly { width: 12px; height: 8px; }
.bolt { width: 10px; height: 14px; }
.rule { width: 2px; align-self: stretch; margin: 3px 0; background: #333; border-right: 1px solid #555; }
.grip { width: 14px; height: 3px; background: repeating-linear-gradient(90deg, #111 0 2px, transparent 2px 3px); }

.app { height: 100vh; display: flex; flex-direction: column; }

.menubar { height: 15px; flex: none; display: flex; align-items: center; gap: 12px; padding: 0 13px 2px 12px; background: linear-gradient(#f6f6f6, #c6c6c6); border-bottom: 1px solid #111; font: 500 11px/13px Roboto, sans-serif; color: #111; }
.menubar a { color: inherit; text-decoration: none; }
.menubar .brand { margin: 0 2px 0 1px; font-weight: 700; }
.apple { width: 12px; height: 13px; }
.status-icons { margin-left: auto; display: flex; align-items: center; gap: 11px; }
.status-icons .i14 { height: 10px; }

.appbar { height: 24px; flex: none; display: flex; align-items: center; padding: 0 16px 0 5px; background: linear-gradient(#4c4c4c, #424242); border-top: 1px solid #666; border-bottom: 1px solid #2c2c2c; }
.light { width: 8px; height: 8px; margin-right: 6px; border-radius: 50%; }
.red { background: radial-gradient(#7a1510 15%, #f0605a 40%); }
.amber { background: radial-gradient(#f8d880, #d89a30); }
.green { background: radial-gradient(#b8e8a0, #55ab44); }
.id { width: 14px; margin: 0 15px 0 8px; font: 500 13px/16px Roboto, sans-serif; color: #96284f; }
.br { width: 12px; height: 10px; background: #222; border: 1px solid #999; font-size: 7px; font-weight: 700; }
.zoom { gap: 5px; margin: 0 8px 0 18px; font: 700 9px/12px "Noto Sans", sans-serif; }
.drop { gap: 2px; margin-left: 10px; }
.workspace { margin-left: auto; display: flex; align-items: center; align-self: stretch; }
.advanced { gap: 6px; margin: 0 9px; font: 700 9px/12px Roboto, sans-serif; }
.help { display: flex; align-items: center; width: 79px; height: 13px; margin-left: 4px; background: #969696; border: 1px solid #222; color: #222; }
.help input { width: 100%; min-width: 0; }

.control { height: 33px; flex: none; display: flex; align-items: center; padding: 1px 1px; background: #464646; border-top: 1px solid #525252; border-bottom: 1px solid #222; overflow: hidden; }
.vgrip { width: 3px; height: 16px; margin: 0 4px 0 1px; background: repeating-linear-gradient(#111 0 2px, transparent 2px 4px); }
.grp { display: grid; grid-auto-rows: 13px; row-gap: 2px; align-items: center; flex: none; }
.grp button { height: 13px; }
.grp .on { background: #2c2c2c; outline: 1px solid #222; }
.modes { width: 17px; margin: 0 2px 0 1px; font: 10px/13px "Noto Sans", sans-serif; }
.aligns { grid-template-columns: repeat(4, 16px); column-gap: 2px; margin: 0 3px 0 2px; }
.num { grid-template-columns: 16px 12px 33px; margin: 0 2px 0 3px; }
.num > svg { justify-self: center; }
.sp { width: 8px; height: 11px; }
.sp.dim { color: #777; }
.grp input:not([type=checkbox]) { height: 11px; min-width: 0; width: 100%; padding: 0 1px 0 2px; background: #979797; border: 1px solid #333; color: #111; line-height: 9px; }
.lists { width: 17px; margin: 0 1px; }
.style { grid-template-columns: 16px 94px; margin: 0 3px 0 4px; column-gap: 3px; justify-items: center; }
.style > .pick, .hyph { width: 94px; }
.pick { position: relative; display: flex; align-items: center; height: 11px; background: #979797; border: 1px solid #2c2c2c; color: #111; }
.pick select { appearance: none; width: 100%; height: 9px; padding: 0 2px; line-height: 9px; }
.pick .dn { position: absolute; right: 0; top: 0; width: 9px; height: 9px; padding: 1px; background: #4a4a4a; color: #ddd; }
.pick.dark { background: #555; color: #ddd; }
.lens { width: 12px; height: 10px; flex: none; }
.hyph { display: flex; justify-content: space-between; align-items: center; font-weight: 600; }
.hyph label { display: flex; align-items: center; gap: 3px; }
.hyph input { width: 8px; height: 8px; accent-color: #444; }
.cols { grid-template-columns: 14px 11px 22px; margin: 0 2px 0 1px; }
.spans { grid-template-columns: 14px 51px; column-gap: 2px; margin-right: 4px; }
.grp .off:not([type=checkbox]) { color: #6b6b6b; }
.fonts { width: 106px; margin-left: 6px; }
.size { grid-template-columns: 15px 12px 46px; margin: 0 4px 0 1px; }
.caps { grid-template-columns: repeat(3, 18px); font: 10px/11px "Liberation Serif", serif; }
.caps button { display: block; }
.caps sup, .caps sub, .caps small { font-size: 7px; line-height: 1px; }
.under { text-decoration: underline; }
.strike { text-decoration: line-through; }
.end { display: flex; align-items: center; gap: 9px; margin-left: auto; }

.workarea { flex: 1; min-height: 0; display: flex; background: #292929; }
.strip { height: 8px; flex: none; display: flex; align-items: center; padding: 0 2px; background: #2b2b2b; }
.dock .strip { justify-content: flex-end; }
.tools { width: 22px; flex: none; background: #444; border-right: 1px solid #2a2a2a; }
.tools .grip { margin: 4px 0 5px 3px; }
.set { padding: 1px 2px 1px; border-bottom: 1px solid #333; }
.set button { width: 17px; height: 15px; }
.set svg { width: 16px; height: 14px; }
.set .on { background: #2e2e2e; }
.fills { width: 20px; height: 72px; margin-top: 2px; }

.doc { position: relative; flex: 1; min-width: 0; display: flex; flex-direction: column; }
.tabs { height: 13px; flex: none; background: #2b2b2b; }
.tab { display: flex; align-items: center; gap: 6px; width: 116px; height: 13px; padding-left: 5px; background: #464646; font: 700 8px/12px Roboto, sans-serif; white-space: nowrap; }
.tab button { font-size: 9px; }
.hruler { height: 13px; flex: none; background: #1b1b1b; }
.digits { font: 7px "Noto Sans", sans-serif; fill: #bbb; }
.view { flex: 1; min-height: 0; display: flex; }
.vruler { width: 13px; flex: none; background: #1b1b1b; overflow: hidden; }
.vruler svg { height: 100%; }
.board { position: relative; flex: 1; min-width: 0; overflow: hidden; background: #5c5c5c; }
.layer { position: absolute; inset: 0; }
.frame { position: absolute; top: 118px; width: 247px; color: #0c0c18; font: 14px/19px Lato, sans-serif; white-space: nowrap; }
.one { left: 90px; }
.two { left: 356px; }
.three { left: 621px; }
.frame h2 { margin: 0 0 20px; font: 900 15px/19px Lato, sans-serif; }
.frame p { margin: 0; }
.frame mark { display: block; width: fit-content; height: 18px; margin-bottom: 1px; background: #b5cff5; color: inherit; }
.three p mark { min-width: 60px; }
.frame b { font-weight: 400; color: #6fa4ea; font-size: 9px; }
.cursor { position: absolute; left: 342px; top: 307px; width: 12px; height: 12px; }
.vscroll { width: 13px; flex: none; display: flex; flex-direction: column; justify-content: space-between; align-items: center; padding: 1px 0 2px; background: #303030; border-right: 1px solid #222; }
.vscroll .dn:first-child, .up { rotate: 180deg; }
.bottom { height: 11px; flex: none; display: flex; align-items: center; background: #464646; border-top: 1px solid #222; padding-left: 25px; gap: 4px; }
.page { width: 56px; padding-left: 3px; }
.pre { width: 42px; white-space: nowrap; }
.dot { width: 7px; height: 7px; border-radius: 50%; background: #666; }
.hscroll { flex: 1; display: flex; align-items: center; height: 10px; padding: 0 3px 0 1px; background: #303030; }
.thumb { width: 117px; height: 10px; margin: 0 auto 0 143px; background: #888; }
.split { width: 24px; height: 9px; }

.panel { position: absolute; right: 0; top: 194px; width: 148px; display: flex; flex-direction: column; background: #444; border: 1px solid #222; box-shadow: 0 2px 4px #0006; }
.phead { height: 13px; display: flex; align-items: center; gap: 8px; padding-right: 2px; background: #2d2d2d; }
.panel h3 { display: flex; align-items: center; gap: 2px; margin: 0 auto 0 0; padding: 0 4px 0 2px; font: 700 8px/13px Roboto, sans-serif; background: #444; }
.mixed { height: 16px; display: flex; align-items: center; justify-content: space-between; padding: 0 2px; border-bottom: 1px solid #333; font-size: 7px; }
.plist { height: 154px; display: flex; border-bottom: 1px solid #2c2c2c; }
.plist ul { flex: 1; margin: 0; padding: 0; list-style: none; }
.plist li { height: 14px; padding-left: 22px; border-bottom: 1px solid #333; font: 7px/14px Roboto, sans-serif; }
.pscroll { width: 9px; display: flex; flex-direction: column; justify-content: space-between; align-items: center; padding: 2px 0; background: #383838; color: #888; }
.pfoot { height: 13px; display: flex; align-items: center; justify-content: flex-end; gap: 9px; padding-right: 17px; }
.pend { height: 5px; display: flex; align-items: center; justify-content: center; background: #3c3c3c; border-top: 1px solid #2a2a2a; }

.dock { width: 115px; flex: none; background: #444; border-left: 1px solid #222; margin-left: 1px; }
.sec { border-top: 1px solid #2c2c2c; }
.sec .grip { margin: 2px auto; }
.sec button { justify-content: flex-start; gap: 5px; width: 111px; height: 20px; margin-left: 1px; padding-left: 5px; font: 700 8px/12px Roboto, sans-serif; }
.sec button svg, .mb { width: 13px; height: 12px; }
.solo button { height: 21px; }
.sec .on { background: #303030; border: 1px solid #222; border-radius: 2px; padding-left: 4px; }
.mb { background: #aaa; color: #333; font-size: 7px; line-height: 12px; text-align: center; }
.solo:last-child { border-bottom: 1px solid #2c2c2c; }
.desk { height: 2px; flex: none; background: #1c2030; }

.callout { position: absolute; left: 59px; top: 51px; width: 410px; font-family: Lato, sans-serif; font-weight: 700; font-size: 25px; }
.tip { width: fit-content; height: 39px; margin-left: 26px; padding: 0 14px 0 13px; line-height: 38px; color: #fff; background: #000000ec; border: 1px solid #999; border-bottom: 0; border-radius: 17px 17px 0 0; }
.key { display: flex; height: 35px; border: 3px solid #fff; border-radius: 18px; overflow: hidden; box-shadow: 0 8px 20px #0007; line-height: 27px; position: relative; }
.key span { width: 77px; text-align: center; background: #888; color: #fff; font-size: 23px; }
.key strong { flex: 1; padding-left: 7px; background: #f8cd0a; color: #0c0c0c; font-weight: 700; }
.win { margin: -2px 3px 0 0; }
.time { position: absolute; left: 1px; bottom: 0; font: 700 12px/14px "Noto Sans", sans-serif; color: #fff; text-shadow: 0 0 2px #000, 0 0 2px #000; }
.mark { position: absolute; right: 17px; bottom: 8px; font: 400 38px/44px Lato, sans-serif; color: #333; opacity: .7; text-shadow: 0 0 3px #999, 0 0 2px #999; }
.mark b { font-weight: 700; color: #222; }
```
